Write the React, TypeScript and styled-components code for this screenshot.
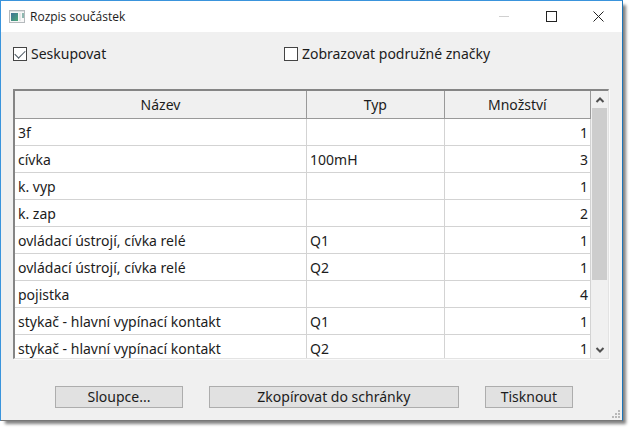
import React, { useState } from "react";
import styled, { createGlobalStyle } from "styled-components";

const GlobalStyle = createGlobalStyle`
  * { box-sizing: border-box; }
  body {
    margin: 0;
    background: #fff;
    color: #1c1c1c;
    font-family: "Noto Sans", "Open Sans", sans-serif;
    font-size: 14px;
    line-height: 18px;
  }
`;

const Window = styled.main`
  margin: 0 12px 12px 0;
  border: 1px solid #3a94dc;
  border-right-color: #1b74b8;
  border-bottom-color: #777;
  background: #f0f0f0;
  box-shadow: 4px 4px 3px -1px #808080;
`;

const TitleBar = styled.header`
  display: flex;
  align-items: center;
  height: 31px;
  padding-left: 8px;
  background: #fff;
`;

const Title = styled.h1`
  flex: 1;
  margin: 0 0 0 5px;
  font: 400 12px/18px "Open Sans", "Noto Sans", sans-serif;
`;

const CaptionButton = styled.button<{ $muted?: boolean }>`
  display: grid;
  place-items: center;
  width: 47px;
  height: 30px;
  padding: 0;
  border: 0;
  background: transparent;
  color: ${(p) => (p.$muted ? "#d0d0d0" : "#222")};
`;

const Content = styled.div`
  padding: 12px 13px 12px 12px;
`;

const Options = styled.div`
  display: grid;
  grid-template-columns: 5fr 6fr;
  height: 20px;
  align-items: center;
`;

const Option = styled.label`
  display: flex;
  align-items: center;
  gap: 4px;
  white-space: nowrap;
`;

const CheckInput = styled.input`
  appearance: none;
  width: 14px;
  height: 14px;
  margin: 0;
  border: 1px solid #444;
  background: #fff;
  display: grid;
  place-items: center;

  &:checked::before {
    content: "";
    width: 9px;
    height: 5px;
    margin-top: -3px;
    border: solid #4a5560;
    border-width: 0 0 1px 1px;
    transform: rotate(-45deg);
  }
`;

const ListFrame = styled.section`
  display: flex;
  height: 270px;
  margin-top: 25px;
  border: 1px solid #e3e3e3;
  border-top: 2px solid #858585;
  border-left: 2px solid #858585;
  background: #fff;
  box-shadow: 1px 1px 0 #fafafa;
`;

const ListView = styled.div`
  flex: 1;
  overflow: hidden;
`;

const PartsTable = styled.table`
  width: 100%;
  table-layout: fixed;
  border-collapse: separate;
  border-spacing: 0;
`;

const HeadCell = styled.th<{ $width: string }>`
  width: ${(p) => p.$width};
  height: 28px;
  padding: 0;
  border: solid #999;
  border-width: 0 1px 1px 0;
  background: #f0f0f0;
  font-weight: 400;
`;

const Cell = styled.td<{ $number?: boolean }>`
  height: 27px;
  padding: 1px 2px 0 3px;
  border: solid #d3d3d3;
  border-width: 0 1px 1px 0;
  text-align: ${(p) => (p.$number ? "right" : "left")};
  white-space: nowrap;
`;

const ScrollBar = styled.div`
  display: flex;
  flex-direction: column;
  width: 17px;
  padding-left: 1px;
  background: #f0f0f0;
`;

const ScrollButton = styled.button`
  display: grid;
  place-items: center;
  height: 17px;
  padding: 0;
  border: 0;
  background: transparent;
  color: #505050;
`;

const ScrollTrack = styled.div`
  flex: 1;
`;

const ScrollThumb = styled.div`
  width: 15px;
  height: 74%;
  background: #cdcdcd;
`;

const Actions = styled.div`
  display: flex;
  margin: 27px 36px 0 42px;
  gap: 26px;
`;

const ActionButton = styled.button<{ $share: number }>`
  flex: ${(p) => p.$share} 1 0;
  height: 22px;
  padding: 0;
  border: 1px solid #adadad;
  background: #e1e1e1;
  color: inherit;
  font: inherit;
  white-space: nowrap;
`;

const Grip = styled.svg`
  position: absolute;
  right: 1px;
  bottom: 1px;
`;

const Body = styled.div`
  position: relative;
`;

const parts = [
  ["3f", "", 1],
  ["cívka", "100mH", 3],
  ["k. vyp", "", 1],
  ["k. zap", "", 2],
  ["ovládací ústrojí, cívka relé", "Q1", 1],
  ["ovládací ústrojí, cívka relé", "Q2", 1],
  ["pojistka", "", 4],
  ["stykač - hlavní vypínací kontakt", "Q1", 1],
  ["stykač - hlavní vypínací kontakt", "Q2", 1],
];

const AppIcon = () => (
  <svg width="16" height="14" viewBox="0 0 16 14" aria-hidden="true">
    <defs>
      <linearGradient id="pane" x1="0" y1="0" x2="1" y2="1">
        <stop offset="0" stopColor="#3e7196" />
        <stop offset="1" stopColor="#4ba878" />
      </linearGradient>
    </defs>
    <rect x="0.5" y="0.5" width="15" height="12" fill="#f7f7f7" stroke="#b5babd" />
    <path d="M1 1.5h14" stroke="#dce0e2" />
    <rect x="2" y="3" width="7" height="8" fill="url(#pane)" />
    <rect x="10" y="3" width="2" height="8" fill="#e5e8e8" />
    <rect x="13" y="3" width="2" height="5" fill="#8eb8b0" />
  </svg>
);

const Chevron = ({ down = false }) => (
  <svg width="10" height="8" viewBox="0 0 10 8" fill="none" stroke="currentColor" strokeWidth="2" aria-hidden="true">
    <path d={down ? "M1.5 2L5 5.5L8.5 2" : "M1.5 6L5 2.5L8.5 6"} />
  </svg>
);

export default function App() {
  const [grouped, setGrouped] = useState(true);
  const [secondary, setSecondary] = useState(false);

  return (
    <>
      <GlobalStyle />
      <Window>
        <TitleBar>
          <AppIcon />
          <Title>Rozpis součástek</Title>
          <CaptionButton $muted aria-label="Minimalizovat">
            <svg width="11" height="11"><path d="M0 5.5h10" stroke="currentColor" /></svg>
          </CaptionButton>
          <CaptionButton aria-label="Maximalizovat">
            <svg width="11" height="11"><rect x="0.5" y="0.5" width="10" height="10" fill="none" stroke="currentColor" /></svg>
          </CaptionButton>
          <CaptionButton aria-label="Zavřít">
            <svg width="11" height="11"><path d="M0.5 0.5l10 10M10.5 0.5l-10 10" stroke="currentColor" /></svg>
          </CaptionButton>
        </TitleBar>
        <Body>
          <Content>
            <Options>
              <Option>
                <CheckInput type="checkbox" checked={grouped} onChange={(e) => setGrouped(e.target.checked)} />
                Seskupovat
              </Option>
              <Option>
                <CheckInput type="checkbox" checked={secondary} onChange={(e) => setSecondary(e.target.checked)} />
                Zobrazovat podružné značky
              </Option>
            </Options>
            <ListFrame>
              <ListView>
                <PartsTable>
                  <thead>
                    <tr>
                      <HeadCell $width="50.7%">Název</HeadCell>
                      <HeadCell $width="23.9%">Typ</HeadCell>
                      <HeadCell $width="25.4%">Množství</HeadCell>
                    </tr>
                  </thead>
                  <tbody>
                    {parts.map(([name, type, count], i) => (
                      <tr key={i}>
                        <Cell>{name}</Cell>
                        <Cell>{type}</Cell>
                        <Cell $number>{count}</Cell>
                      </tr>
                    ))}
                  </tbody>
                </PartsTable>
              </ListView>
              <ScrollBar>
                <ScrollButton aria-label="Nahoru"><Chevron /></ScrollButton>
                <ScrollTrack><ScrollThumb /></ScrollTrack>
                <ScrollButton aria-label="Dolů"><Chevron down /></ScrollButton>
              </ScrollBar>
            </ListFrame>
            <Actions>
              <ActionButton $share={127}>Sloupce...</ActionButton>
              <ActionButton $share={250}>Zkopírovat do schránky</ActionButton>
              <ActionButton $share={87}>Tisknout</ActionButton>
            </Actions>
          </Content>
          <Grip width="10" height="10" fill="#b8b8b8" aria-hidden="true">
            <path d="M7 1h2v2h-2zM7 4h2v2h-2zM7 7h2v2h-2zM4 4h2v2h-2zM4 7h2v2h-2zM1 7h2v2h-2z" />
          </Grip>
        </Body>
      </Window>
    </>
  );
}
